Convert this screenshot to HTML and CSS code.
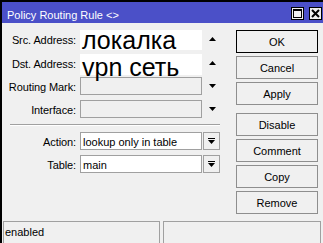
FILE: index.html
```html
<!DOCTYPE html>
<html>
<head>
<meta charset="utf-8">
<link rel="stylesheet" href="styles.css">
</head>
<body>
<div class="window">
  <div class="titlebar">
    <span class="title">Policy Routing Rule &lt;&gt;</span>
    <div class="tbtns">
      <span class="tbtn"><svg width="11" height="11" viewBox="0 0 11 11"><rect x="1.5" y="1.5" width="8" height="8" fill="none" stroke="#000" stroke-width="1"/><rect x="1" y="1" width="9" height="2" fill="#000"/></svg></span>
      <span class="tbtn"><svg width="11" height="11" viewBox="0 0 11 11"><path d="M2 2 L9 9 M9 2 L2 9" stroke="#000" stroke-width="2"/></svg></span>
    </div>
  </div>
  <div class="main">
    <div class="form">
      <div class="row r1">
        <span class="lbl">Src. Address:</span>
        <div class="field"><div class="overlay o1">локалка</div></div>
        <span class="side"><svg width="7" height="4" viewBox="0 0 7 4"><path d="M3.5 0 L7 4 L0 4 Z" fill="#000"/></svg></span>
      </div>
      <div class="row">
        <span class="lbl">Dst. Address:</span>
        <div class="field"><div class="overlay o2">vpn сеть</div></div>
        <span class="side"><svg width="7" height="4" viewBox="0 0 7 4"><path d="M3.5 0 L7 4 L0 4 Z" fill="#000"/></svg></span>
      </div>
      <div class="row">
        <span class="lbl">Routing Mark:</span>
        <div class="field disabled"></div>
        <span class="side"><svg width="7" height="4" viewBox="0 0 7 4"><path d="M0 0 L7 0 L3.5 4 Z" fill="#000"/></svg></span>
      </div>
      <div class="row">
        <span class="lbl">Interface:</span>
        <div class="field disabled"></div>
        <span class="side"><svg width="7" height="4" viewBox="0 0 7 4"><path d="M0 0 L7 0 L3.5 4 Z" fill="#000"/></svg></span>
      </div>
      <div class="sep"></div>
      <div class="row">
        <span class="lbl">Action:</span>
        <div class="field"><span class="val">lookup only in table</span></div>
        <span class="dropbtn"><svg width="7" height="6" viewBox="0 0 7 6"><rect x="0" y="0" width="7" height="1" fill="#000"/><path d="M0 2 L7 2 L3.5 6 Z" fill="#000"/></svg></span>
      </div>
      <div class="row">
        <span class="lbl">Table:</span>
        <div class="field"><span class="val">main</span></div>
        <span class="dropbtn"><svg width="7" height="6" viewBox="0 0 7 6"><rect x="0" y="0" width="7" height="1" fill="#000"/><path d="M0 2 L7 2 L3.5 6 Z" fill="#000"/></svg></span>
      </div>
    </div>
    <div class="buttons">
      <div class="btn default">OK</div>
      <div class="btn">Cancel</div>
      <div class="btn">Apply</div>
      <div class="btn gap">Disable</div>
      <div class="btn">Comment</div>
      <div class="btn">Copy</div>
      <div class="btn">Remove</div>
    </div>
  </div>
  <div class="status">
    <div class="panel p1">enabled</div>
    <div class="panel p2"></div>
  </div>
</div>
</body>
</html>
```

FILE: styles.css
```css
* { box-sizing: border-box; }
body {
  margin: 0;
  font-family: "Liberation Sans", Arial, sans-serif;
  font-size: 11px;
  color: #000;
}
.window {
  width: 323px;
  height: 243px;
  border-top: 2px solid #000;
  border-left: 2px solid #000;
  background: #f0f0f0;
  display: flex;
  flex-direction: column;
  overflow: hidden;
}
.titlebar {
  height: 21px;
  background: #4b50c8;
  color: #fff;
  display: flex;
  align-items: flex-start;
  padding-left: 5px;
  padding-right: 1px;
  flex: none;
}
.title {
  font-size: 11px;
  line-height: 12px;
  padding-top: 7px;
}
.tbtns {
  margin-left: auto;
  display: flex;
  gap: 5px;
  padding-top: 5px;
}
.tbtn {
  width: 13px;
  height: 13px;
  border: 1px solid #000;
  background: #f0f0f0;
  display: flex;
  align-items: center;
  justify-content: center;
}
.tbtn svg { display: block; }
.main {
  flex: 1;
  display: flex;
  padding-top: 7px;
}
.form {
  width: 218px;
  display: flex;
  flex-direction: column;
  gap: 5px;
}
.row {
  display: flex;
  align-items: center;
  height: 18px;
}
.r1 { margin-bottom: 1px; }
.lbl {
  width: 74px;
  text-align: right;
  white-space: nowrap;
  margin-right: 4px;
  padding-top: 1px;
  letter-spacing: -0.1px;
}
.field {
  width: 122px;
  height: 18px;
  border: 1px solid #a0a0a0;
  background: #fff;
  position: relative;
  display: flex;
  align-items: center;
  padding-left: 2px;
}
.field.disabled { background: #f0f0f0; }
.val { padding-top: 1px; white-space: nowrap; }
.overlay {
  position: absolute;
  z-index: 1;
  left: -1px;
  width: 122px;
  background: #fff;
  font-size: 25px;
  white-space: nowrap;
  padding-left: 2px;
}
.o1 {
  top: -1px;
  height: 20px;
  line-height: 20px;
}
.o2 {
  top: -1px;
  height: 21px;
  line-height: 22px;
  padding-top: 2px;
}
.side {
  width: 17px;
  margin-left: 1px;
  display: flex;
  justify-content: center;
  padding-left: 2px;
}
.side svg, .dropbtn svg { display: block; }
.dropbtn {
  width: 17px;
  height: 18px;
  margin-left: 1px;
  border: 1px solid #a0a0a0;
  background: #f0f0f0;
  display: flex;
  align-items: center;
  justify-content: center;
}
.sep {
  margin: 1px 0 1px 8px;
  height: 2px;
  border-top: 1px solid #a0a0a0;
  border-bottom: 1px solid #fff;
}
.buttons {
  margin-left: 16px;
  width: 82px;
  display: flex;
  flex-direction: column;
  gap: 3px;
}
.btn {
  height: 23px;
  border: 1px solid #8e8e8e;
  background: #f0f0f0;
  display: flex;
  align-items: center;
  justify-content: center;
}
.btn.default { border-color: #000; }
.btn.gap { margin-top: 5px; }
.status {
  height: 22px;
  flex: none;
  display: flex;
  padding-left: 1px;
  gap: 3px;
}
.panel {
  border: 1px solid #a0a0a0;
  border-bottom: none;
  padding: 4px 0 0 1px;
}
.p1 { width: 157px; }
.p2 { width: 158px; }
```
